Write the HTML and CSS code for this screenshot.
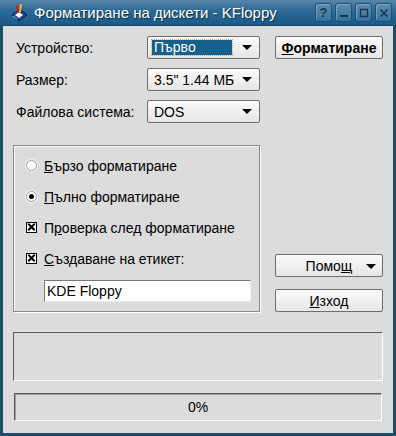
FILE: index.html
```html
<!DOCTYPE html>
<html lang="bg">
<head>
    <meta charset="UTF-8">
    <title>Форматиране на дискети - KFloppy</title>
    <link rel="stylesheet" href="styles.css">
</head>
<body>
    <div class="window">
        <div class="titlebar">
            <svg class="app-icon" width="20" height="20" viewBox="0 0 20 20">
                <path d="M3 12 L11 6 L18 12 L10 18 Z" fill="#1f3f9e" stroke="#0c1f5a" stroke-width="1"/>
                <path d="M6 12 L10 9 L14 12 L10 15 Z" fill="#ffffff"/>
                <path d="M8 2 L9 10" stroke="#d81c1c" stroke-width="2"/>
                <path d="M12 1 L11 9" stroke="#f2c200" stroke-width="2"/>
                <path d="M4 13 L8 16" stroke="#6fb0ff" stroke-width="1"/>
            </svg>
            <span class="title">Форматиране на дискети - KFloppy</span>
            <div class="title-buttons">
                <span class="tbtn">?</span>
                <span class="tbtn">
                    <svg width="10" height="10" viewBox="0 0 10 10"><rect x="1" y="7" width="8" height="2" fill="#1d3447"/></svg>
                </span>
                <span class="tbtn">
                    <svg width="10" height="10" viewBox="0 0 10 10"><rect x="1.5" y="1.5" width="7" height="7" fill="none" stroke="#1d3447" stroke-width="1.4"/></svg>
                </span>
                <span class="tbtn">
                    <svg width="10" height="10" viewBox="0 0 10 10"><path d="M1.5 1.5 L8.5 8.5 M8.5 1.5 L1.5 8.5" stroke="#1d3447" stroke-width="1.6"/></svg>
                </span>
            </div>
        </div>

        <div class="content">
            <div class="main">
                <div class="left">
                    <div class="fields">
                        <label class="field-label">Устройство:</label>
                        <div class="combo focused"><span class="combo-text">Първо</span><span class="arrow"></span></div>
                        <label class="field-label">Размер:</label>
                        <div class="combo"><span class="combo-text">3.5" 1.44 МБ</span><span class="arrow"></span></div>
                        <label class="field-label">Файлова система:</label>
                        <div class="combo"><span class="combo-text">DOS</span><span class="arrow"></span></div>
                    </div>

                    <div class="group">
                        <div class="opt"><span class="radio"></span><span><u>Б</u>ързо форматиране</span></div>
                        <div class="opt"><span class="radio checked"></span><span><u>П</u>ълно форматиране</span></div>
                        <div class="opt"><span class="check"></span><span>П<u>р</u>оверка след форматиране</span></div>
                        <div class="opt"><span class="check"></span><span><u>С</u>ъздаване на етикет:</span></div>
                        <div class="text-input">KDE Floppy</div>
                    </div>
                </div>

                <div class="right">
                    <div class="button bold"><u>Ф</u>орматиране</div>
                    <div class="bottom-buttons">
                        <div class="button menu-button">Помо<u>щ</u><span class="arrow"></span></div>
                        <div class="button"><u>И</u>зход</div>
                    </div>
                </div>
            </div>

            <div class="status"></div>
            <div class="progress">0%</div>
        </div>
    </div>
</body>
</html>
```

FILE: styles.css
```css
html, body {
    margin: 0;
    width: 396px;
    height: 436px;
    overflow: hidden;
    font-family: "Liberation Sans", Arial, sans-serif;
    font-size: 14px;
    color: #000;
    background: #1d4b6c;
}
.window {
    width: 396px;
    height: 436px;
    box-sizing: border-box;
    background: #dcdcdc;
    border-left: 3px solid #1d4b6c;
    border-right: 3px solid #1d4b6c;
    border-bottom: 3px solid #1d4b6c;
    display: flex;
    flex-direction: column;
}
.titlebar {
    height: 26px;
    margin: 0 -3px;
    background: linear-gradient(to bottom, #5786aa, #2b6894 45%, #1c5b86);
    display: flex;
    align-items: center;
    padding: 0 4px 0 9px;
    box-sizing: border-box;
    border-bottom: 1px solid #1a4a6b;
}
.app-icon {
    margin-right: 5px;
}
.title {
    color: #fff;
    font-size: 15px;
    text-shadow: 1px 1px 1px #0e2c42;
    flex: 1;
}
.title-buttons {
    display: flex;
    gap: 3px;
}
.tbtn {
    width: 15px;
    height: 17px;
    border: 1px solid #1f4f72;
    border-radius: 3px;
    background: linear-gradient(to bottom, #5f8db0, #3472a0);
    box-shadow: inset 1px 1px 0 rgba(255, 255, 255, 0.25);
    display: flex;
    align-items: center;
    justify-content: center;
    color: #1d3447;
    font-weight: 700;
    font-size: 13px;
}
.content {
    flex: 1;
    padding: 10px 10px 0 10px;
    display: flex;
    flex-direction: column;
}
.main {
    display: flex;
    gap: 15px;
}
.left {
    width: 247px;
}
.fields {
    display: grid;
    grid-template-columns: 134px 113px;
    grid-template-rows: 23px 23px 23px;
    row-gap: 9px;
    align-items: center;
}
.field-label {
    padding-left: 3px;
}
.combo {
    height: 23px;
    box-sizing: border-box;
    border: 1px solid #6e6e6e;
    border-radius: 2px;
    background: linear-gradient(to bottom, #fafafa, #e6e6e6);
    display: flex;
    align-items: center;
    padding: 0 7px 0 4px;
}
.combo-text {
    flex: 1;
    padding-left: 2px;
}
.combo.focused .combo-text {
    background: #155f8c;
    color: #fff;
    outline: 1px dotted #ff9a3c;
    height: 15px;
    line-height: 15px;
    margin-right: 10px;
}
.arrow {
    width: 0;
    height: 0;
    border-left: 5px solid transparent;
    border-right: 5px solid transparent;
    border-top: 5px solid #000;
}
.group {
    margin-top: 22px;
    height: 167px;
    box-sizing: border-box;
    border: 1px solid #8a8a8a;
    box-shadow: 1px 1px 0 #fff, inset 1px 1px 0 #fff;
    padding: 4px 9px 0 12px;
}
.opt {
    height: 31px;
    display: flex;
    align-items: center;
    gap: 7px;
}
.radio {
    width: 11px;
    height: 11px;
    box-sizing: border-box;
    border-radius: 50%;
    border: 1px solid #9a9a9a;
    background: #fff;
    box-shadow: 0 0 0 1px #f4f4f4;
    display: flex;
    align-items: center;
    justify-content: center;
}
.radio.checked::after {
    content: "";
    width: 5px;
    height: 5px;
    border-radius: 50%;
    background: #000;
}
.check {
    width: 11px;
    height: 11px;
    box-sizing: border-box;
    border: 1px solid #000;
    background: #fff;
    position: relative;
}
.check::before,
.check::after {
    content: "";
    position: absolute;
    left: 0;
    top: 3px;
    width: 9px;
    height: 2px;
    background: #000;
    transform: rotate(45deg);
}
.check::after {
    transform: rotate(-45deg);
}
.text-input {
    margin: 6px 0 0 18px;
    width: 207px;
    height: 22px;
    box-sizing: border-box;
    border: 1px solid #777;
    border-right-color: #ececec;
    border-bottom-color: #ececec;
    background: #fff;
    line-height: 20px;
    padding-left: 2px;
}
.right {
    width: 108px;
    display: flex;
    flex-direction: column;
    justify-content: space-between;
}
.bottom-buttons {
    display: flex;
    flex-direction: column;
    gap: 12px;
}
.button {
    height: 23px;
    box-sizing: border-box;
    border: 1px solid #6e6e6e;
    border-radius: 2px;
    background: linear-gradient(to bottom, #fafafa, #e6e6e6);
    display: flex;
    align-items: center;
    justify-content: center;
}
.button.bold {
    font-weight: 700;
}
.menu-button {
    position: relative;
}
.menu-button .arrow {
    position: absolute;
    right: 6px;
    top: 9px;
}
.status {
    margin-top: 20px;
    height: 49px;
    box-sizing: border-box;
    border: 1px solid #5a5a5a;
    border-right-color: #fff;
    border-bottom-color: #fff;
}
.progress {
    margin: 12px 1px 0 1px;
    height: 28px;
    box-sizing: border-box;
    border: 1px solid #5a5a5a;
    border-right-color: #fff;
    border-bottom-color: #fff;
    box-shadow: inset 1px 1px 0 #a0a0a0;
    display: flex;
    align-items: center;
    justify-content: center;
}
```
